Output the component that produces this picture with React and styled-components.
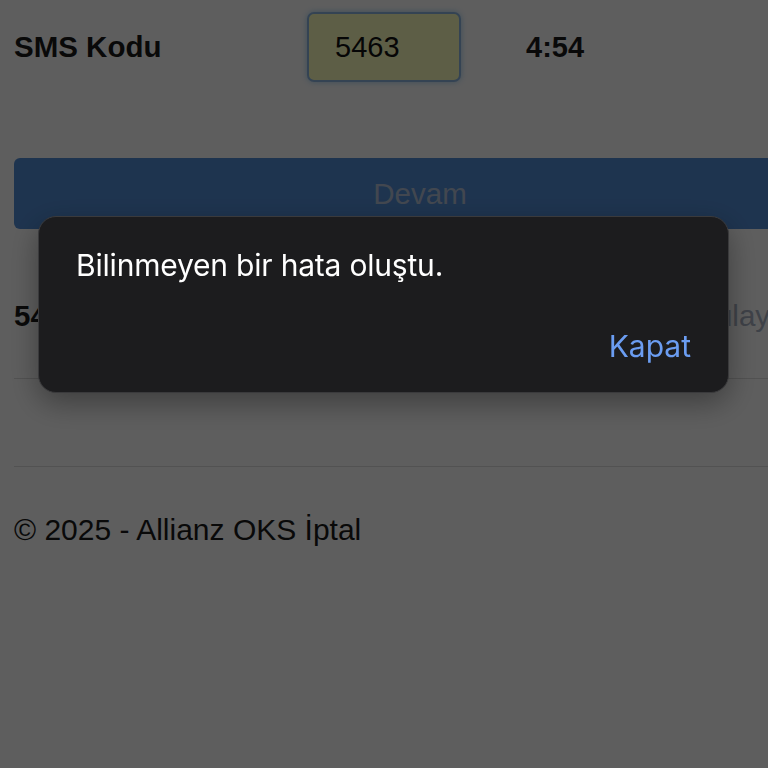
import React from "react";
import styled, { createGlobalStyle } from "styled-components";

const GlobalStyle = createGlobalStyle`
  html, body {
    margin: 0;
    padding: 0;
    background: #ffffff;
    overflow: hidden;
  }
  body {
    font-family: "Liberation Sans", Arial, sans-serif;
    color: #1a1a1a;
  }
`;

const Page = styled.div`
  width: 812px;
  padding: 12px 14px;
`;

const FormRow = styled.div`
  display: grid;
  grid-template-columns: 293px 154px auto;
  align-items: center;
  height: 70px;
`;

const Label = styled.div`
  font-size: 29.5px;
  font-weight: 700;
`;

const CodeInput = styled.input`
  box-sizing: border-box;
  width: 154px;
  height: 70px;
  border: 2px solid #8eb6e2;
  border-radius: 7px;
  background: #fbffbd;
  padding: 0 0 0 26px;
  font-family: "Liberation Sans", Arial, sans-serif;
  font-size: 29px;
  color: #111;
  outline: none;
  box-shadow: 0 0 6px rgba(102, 175, 233, 0.6);
`;

const Timer = styled.div`
  margin-left: 65px;
  font-size: 29px;
  font-weight: 700;
`;

const SubmitButton = styled.button`
  display: block;
  width: 812px;
  height: 71px;
  margin-top: 76px;
  border: 0;
  border-radius: 6px;
  background: #528dd6;
  color: #b4c2d8;
  font-family: "Liberation Sans", Arial, sans-serif;
  font-size: 29.5px;
`;

const InfoRow = styled.div`
  display: grid;
  grid-template-columns: 638px auto;
  align-items: center;
  height: 40px;
  margin-top: 67px;
  font-size: 29.5px;
`;

const Phone = styled.span`
  font-weight: 700;
`;

const LinkText = styled.span`
  color: #a9b2c4;
  white-space: nowrap;
`;

const Divider = styled.hr`
  margin: ${(p) => p.top}px 0 0;
  border: 0;
  border-top: 1px solid #dddddd;
`;

const Footer = styled.footer`
  margin-top: 46px;
  font-size: 30px;
  line-height: 34px;
`;

const Backdrop = styled.div`
  position: fixed;
  inset: 0;
  background: rgba(0, 0, 0, 0.63);
`;

const Dialog = styled.div`
  position: fixed;
  left: 38px;
  top: 216px;
  width: 691px;
  height: 177px;
  box-sizing: border-box;
  background: #1c1c1e;
  border: 1px solid #3a3a3c;
  border-radius: 18px;
  box-shadow: 0 10px 30px rgba(0, 0, 0, 0.35);
  display: flex;
  flex-direction: column;
  padding: 30px 37px 28px;
  font-family: Inter, "Noto Sans", sans-serif;
`;

const Message = styled.div`
  color: #ffffff;
  font-size: 30px;
  line-height: 36px;
  letter-spacing: -0.2px;
`;

const CloseButton = styled.button`
  align-self: flex-end;
  margin-top: auto;
  background: none;
  border: 0;
  padding: 0;
  color: #6b9df2;
  font-family: Inter, "Noto Sans", sans-serif;
  font-size: 30px;
  line-height: 36px;
`;

export default function App() {
  return (
    <>
      <GlobalStyle />
      <Page>
        <FormRow>
          <Label>SMS Kodu</Label>
          <CodeInput defaultValue="5463" />
          <Timer>4:54</Timer>
        </FormRow>
        <SubmitButton disabled>Devam</SubmitButton>
        <InfoRow>
          <Phone>545 *** ** 21</Phone>
          <LinkText>Doğrulayın</LinkText>
        </InfoRow>
        <Divider top={42} />
        <Divider top={87} />
        <Footer>© 2025 - Allianz OKS İptal</Footer>
      </Page>
      <Backdrop />
      <Dialog role="alertdialog">
        <Message>Bilinmeyen bir hata oluştu.</Message>
        <CloseButton>Kapat</CloseButton>
      </Dialog>
    </>
  );
}
